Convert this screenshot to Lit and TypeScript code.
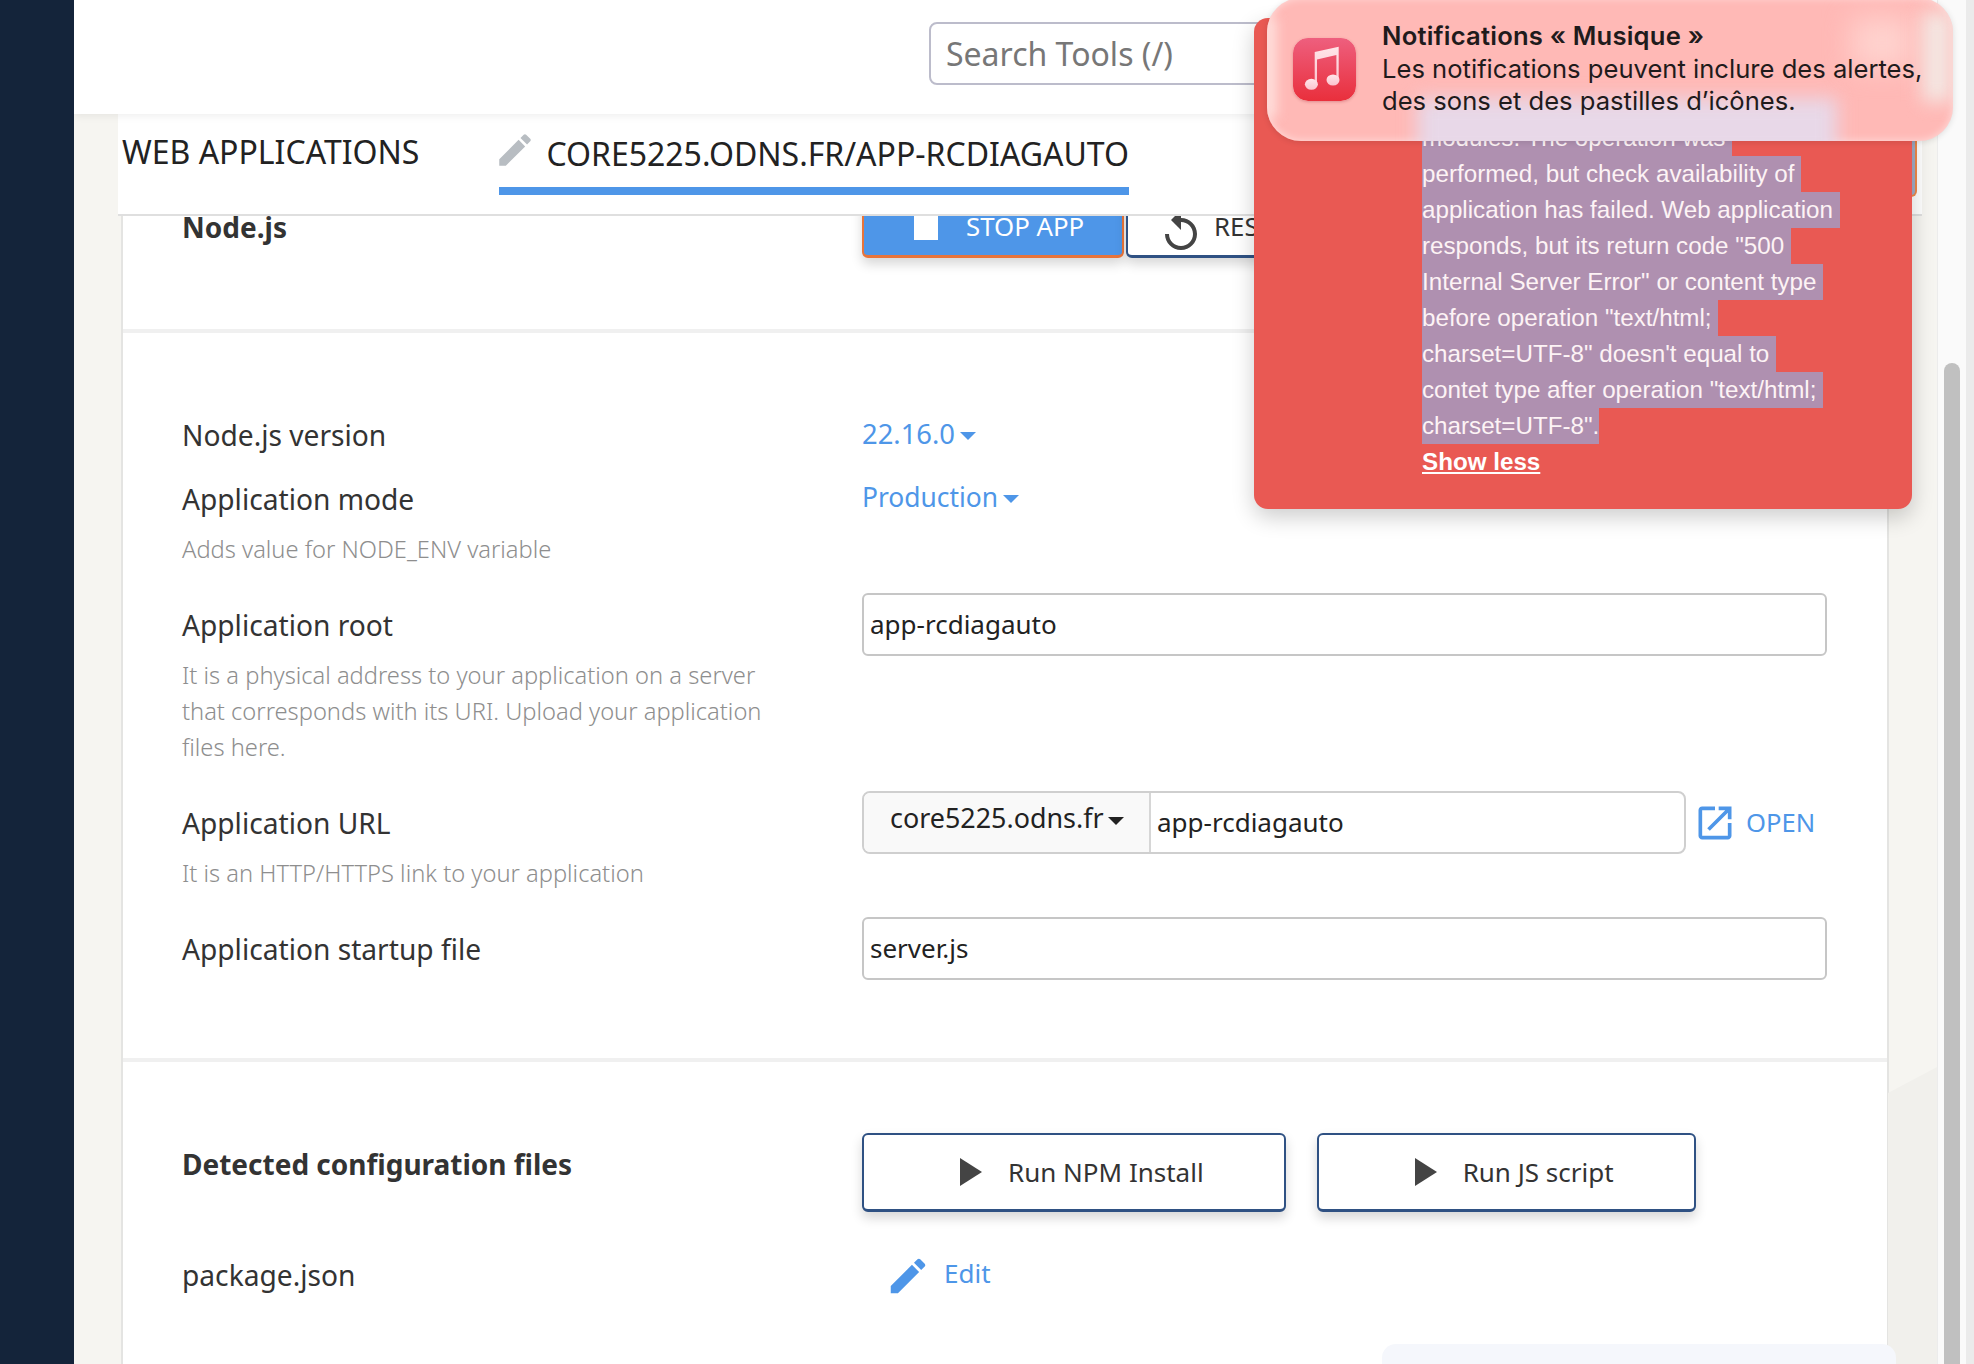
import { LitElement, html, css, svg } from "lit";
import { customElement } from "lit/decorators.js";

const icon = (d: string, size: number, cls = "") => html`<svg class="ic ${cls}" width=${size} height=${size} viewBox="0 0 24 24" fill="currentColor"><path d=${d}></path></svg>`;
const PENCIL = "M3 17.25V21h3.75L17.81 9.94l-3.75-3.75L3 17.25zM20.71 7.04c.39-.39.39-1.02 0-1.41l-2.34-2.34c-.39-.39-1.02-.39-1.41 0l-1.83 1.83 3.75 3.75 1.83-1.83z";
const REPLAY = "M12 5V1L7 6l5 5V7c3.31 0 6 2.69 6 6s-2.69 6-6 6-6-2.69-6-6H4c0 4.42 3.58 8 8 8s8-3.58 8-8-3.58-8-8-8z";
const STOP = "M6 6h12v12H6z";
const PLAY = "M8 5v14l11-7z";
const OPEN = "M19 19H5V5h7V3H5c-1.11 0-2 .9-2 2v14c0 1.1.89 2 2 2h14c1.1 0 2-.9 2-2v-7h-2v7zM14 3v2h3.59l-9.83 9.83 1.41 1.41L19 6.41V10h2V3h-7z";

const caret = (cls: string) => html`<svg class=${cls} width="16" height="8" viewBox="0 0 16 8" fill="currentColor"><path d="M0 0h16L8 8z"></path></svg>`;

const LINES = [
  "modules. The operation was ",
  "performed, but check availability of ",
  "application has failed. Web application ",
  'responds, but its return code "500 ',
  'Internal Server Error" or content type ',
  'before operation "text/html; ',
  'charset=UTF-8" doesn\'t equal to ',
  'contet type after operation "text/html; ',
  'charset=UTF-8".',
];

@customElement("app-root")
export class AppRoot extends LitElement {
  static styles = css`
    :host { display: block; width: 1974px; height: 1364px; position: relative; overflow: hidden; font-family: "Noto Sans", "Open Sans", sans-serif; color: #333; background: #f6f5f1; }
    * { box-sizing: border-box; }
    .ic { display: block; flex: none; }
    .shell { display: flex; height: 1364px; }
    .side { width: 74px; flex: none; background: #14243a; }
    .main { width: 1863px; flex: none; display: flex; flex-direction: column; height: 1364px; overflow: hidden; position: relative; background: #f6f5f1; }
    .rail { width: 37px; flex: none; display: flex; background: #fafafa; border-left: 1px solid #ececec; }
    .track { width: 28px; padding: 363px 0 0 6px; }
    .thumb { width: 16px; height: 1001px; background: #c0c0c0; border-radius: 8px 8px 0 0; }
    .rim { flex: 1; background: #ebebeb; }

    .top { height: 114px; flex: none; background: #fff; padding: 22px 0 0 855px; box-shadow: 0 2px 8px rgba(0,0,0,.07); position: relative; z-index: 2; }
    .search { width: 420px; height: 63px; border: 2px solid #bcbccb; border-radius: 8px; padding-left: 15px; font-size: 32px; line-height: 60px; color: #777; }

    .strip { height: 102px; flex: none; margin: 0 15px 0 44px; padding: 18px 5px 0 4px; background: #fff; border-bottom: 2px solid #dfdfdf; display: flex; gap: 80px; position: relative; z-index: 1; }
    .crumb { font-size: 32px; line-height: 40px; color: #222; white-space: nowrap; }
    .tab { display: flex; align-items: flex-start; gap: 10px; height: 62px; margin-top: 1px; border-bottom: 8px solid #4e96e8; font-size: 32px; line-height: 42px; color: #222; white-space: nowrap; }
    .tab .ic { color: #b8bdc2; margin: -4px 0 0 -5px; }
    .behind { margin-left: auto; width: 60px; height: 65px; background: #a3aec8; border-bottom: 2px solid #f08a4a; border-right: 2px solid #f08a4a; border-radius: 0 0 6px 0; }

    .card { width: 1768px; margin-left: 47px; flex: 1; background: #fff; border-left: 2px solid #e4e4e2; border-right: 2px solid #e4e4e2; min-height: 0; position: relative; z-index: 0; }
    .head { height: 113px; overflow: hidden; padding-left: 59px; display: grid; grid-template-columns: 680px 1fr; }
    .head .name { font-size: 28px; font-weight: 700; line-height: 40px; margin-top: -9px; }
    .head .acts { display: flex; gap: 2px; margin-top: -18px; height: 60px; }
    .sec { border-top: 4px solid #f0f0f0; padding: 83px 60px 0 59px; }
    .sec.form { height: 729px; }
    .row { display: grid; grid-template-columns: 680px 1fr; }
    .row + .row { margin-top: 39px; }
    .row.tight { margin-top: 24px; }
    .row.pkg { margin-top: 44px; }
    .lab { font-size: 28.16px; line-height: 38px; height: 40px; }
    .lab.b { font-size: 28px; font-weight: 700; line-height: 39px; }
    .hint { margin-top: 11px; font-size: 23.7px; line-height: 36px; font-weight: 300; color: #8e8e8e; width: 600px; }
    .val { display: flex; align-items: center; gap: 3px; color: #4e96e8; font-size: 26.4px; line-height: 36px; height: 36px; margin-top: -1px; }
    .val.ver { font-size: 27.4px; margin-top: 0; }
    .caret { margin-left: 2px; margin-top: 4px; }
    .field { height: 63px; margin-top: -13px; border: 2px solid #c6c6c6; border-radius: 6px; padding-left: 6px; font-size: 26px; line-height: 59px; color: #222; }
    .urlrow { display: flex; height: 63px; margin-top: -13px; align-items: center; }
    .group { width: 824px; height: 63px; display: flex; border: 2px solid #cfcfcf; border-radius: 8px; overflow: hidden; }
    .pick { width: 287px; flex: none; background: #f9f9f9; border-right: 2px solid #d6d6d6; padding: 0 0 10px 26px; display: flex; align-items: center; gap: 4px; font-size: 26.9px; color: #222; }
    .pick svg { margin-top: 6px; }
    .inner { padding-left: 6px; font-size: 26px; line-height: 59px; color: #222; }
    .open { display: flex; align-items: center; gap: 9px; margin-left: 7px; color: #4e96e8; font-size: 25.6px; }
    .btn { height: 79px; display: flex; align-items: center; justify-content: center; gap: 16px; padding: 0 80px; background: #fff; border: 2px solid #2f5183; border-bottom-width: 3px; border-radius: 6px; box-shadow: 0 6px 12px rgba(0,0,0,.16); font-size: 26px; color: #333; white-space: nowrap; }
    .btn .ic { color: #444; }
    .btns { display: flex; gap: 31px; margin-top: -12px; height: 79px; }
    .stop { width: 262px; height: 60px; justify-content: flex-start; padding: 0 0 0 38px; background: #4e96e8; border-color: #e8743a; color: #fff; font-size: 25.8px; }
    .stop .ic { color: #fff; }
    .stop span, .restart span { margin-top: -3px; }
    .restart { width: 300px; height: 60px; justify-content: flex-start; padding: 0 0 0 29px; gap: 9px; font-size: 25.8px; }
    .restart .ic { color: #444; margin-top: 8px; }
    .edit { display: flex; align-items: center; gap: 13px; margin-left: 23px; color: #4e96e8; font-size: 26px; height: 36px; }
    .edit .ic { margin-top: 3px; }
    .edit span { margin-top: -2px; }

    .deco { position: absolute; left: 1814px; top: 1067px; width: 49px; height: 297px; background: #f1f0ec; clip-path: polygon(0 26px, 49px 0, 49px 297px, 0 297px); }
    .pale { position: absolute; left: 1308px; top: 1344px; width: 514px; height: 40px; background: #f5f7fc; border-radius: 14px 14px 0 0; z-index: 1; }

    .red { position: absolute; z-index: 5; left: 1254px; top: 18px; width: 658px; height: 491px; background: #e95953; border-radius: 14px; padding: 102px 0 0 168px; box-shadow: 0 8px 22px rgba(0,0,0,.2); color: #fdf3f5; font-family: "Liberation Sans", Arial, sans-serif; font-size: 24.2px; line-height: 36px; }
    .red .ln { display: block; width: fit-content; height: 36px; background: #af90b0; white-space: pre; }
    .red .more { display: block; width: fit-content; color: #fff; font-weight: 700; text-decoration: underline; line-height: 35px; }

    .note { position: absolute; z-index: 6; left: 1267px; top: -2px; width: 686px; height: 143px; border-radius: 34px; background: #ffb9b6; overflow: hidden; box-shadow: 0 1px 6px rgba(0,0,0,.12), inset 0 0 8px rgba(255,255,255,.55); font-family: Inter, "Liberation Sans", sans-serif; color: #1f1b1c; }
    .blob { position: absolute; filter: blur(9px); }
    .blob.lav { left: 150px; top: 100px; width: 420px; height: 60px; background: #e8d8e8; }
    .blob.glow { left: 585px; top: 20px; width: 60px; height: 50px; background: #ffd2ce; filter: blur(14px); }
    .blob.edge { left: 655px; top: 14px; width: 30px; height: 90px; background: #f4e6e2; filter: blur(9px); }
    .blob.lft { left: -6px; top: 20px; width: 16px; height: 100px; background: #ffdcd9; filter: blur(6px); }
    .nbody { position: absolute; left: 26px; top: 22px; display: flex; align-items: flex-start; gap: 27px; }
    .app { margin-top: 18px; border-radius: 15px; box-shadow: 0 1px 3px rgba(150,30,50,.3); }
    .ntext { font-size: 25.6px; line-height: 32px; white-space: nowrap; margin-left: -1px; }
    .ntext b { font-weight: 600; display: block; height: 33px; letter-spacing: .2px; }
  `;

  render() {
    return html`
      <div class="shell">
        <div class="side"></div>
        <div class="main">
          <div class="top"><div class="search">Search Tools (/)</div></div>
          <div class="strip">
            <div class="crumb">WEB APPLICATIONS</div>
            <div class="tab">${icon(PENCIL, 42)}<span>CORE5225.ODNS.FR/APP-RCDIAGAUTO</span></div>
            <div class="behind"></div>
          </div>
          <div class="card">
            <div class="head">
              <div class="name">Node.js</div>
              <div class="acts">
                <div class="btn stop">${icon(STOP, 48)}<span>STOP APP</span></div>
                <div class="btn restart">${icon(REPLAY, 48)}<span>RESTART</span></div>
              </div>
            </div>
            <div class="sec form">
              <div class="row">
                <div class="lab">Node.js version</div>
                <div class="val ver">22.16.0${caret("caret")}</div>
              </div>
              <div class="row tight">
                <div><div class="lab">Application mode</div><div class="hint">Adds value for NODE_ENV variable</div></div>
                <div class="val">Production${caret("caret")}</div>
              </div>
              <div class="row">
                <div><div class="lab">Application root</div><div class="hint">It is a physical address to your application on a server that corresponds with its URI. Upload your application files here.</div></div>
                <div class="field">app-rcdiagauto</div>
              </div>
              <div class="row">
                <div><div class="lab">Application URL</div><div class="hint">It is an HTTP/HTTPS link to your application</div></div>
                <div class="urlrow">
                  <div class="group">
                    <div class="pick">core5225.odns.fr${caret("")}</div>
                    <div class="inner">app-rcdiagauto</div>
                  </div>
                  <div class="open">${icon(OPEN, 44)}<span>OPEN</span></div>
                </div>
              </div>
              <div class="row">
                <div class="lab">Application startup file</div>
                <div class="field">server.js</div>
              </div>
            </div>
            <div class="sec">
              <div class="row">
                <div class="lab b">Detected configuration files</div>
                <div class="btns">
                  <div class="btn">${icon(PLAY, 48)}<span>Run NPM Install</span></div>
                  <div class="btn">${icon(PLAY, 48)}<span>Run JS script</span></div>
                </div>
              </div>
              <div class="row pkg">
                <div class="lab">package.json</div>
                <div class="edit">${icon(PENCIL, 46)}<span>Edit</span></div>
              </div>
            </div>
          </div>
          <div class="deco"></div>
          <div class="pale"></div>
        </div>
        <div class="rail"><div class="track"><div class="thumb"></div></div><div class="rim"></div></div>
      </div>

      <div class="red">
        ${LINES.map((l) => html`<span class="ln">${l}</span>`)}
        <span class="more">Show less</span>
      </div>

      <div class="note">
        <div class="blob lav"></div>
        <div class="blob glow"></div>
        <div class="blob edge"></div>
        <div class="blob lft"></div>
        <div class="nbody">
          <svg class="app" width="63" height="63" viewBox="0 0 63 63">
            <defs>
              <linearGradient id="ag" x1="0" y1="0" x2="0" y2="1"><stop offset="0" stop-color="#ee5f7e"></stop><stop offset="1" stop-color="#e92f3c"></stop></linearGradient>
              <linearGradient id="ng" x1="0" y1="0" x2="0" y2="1"><stop offset="0" stop-color="#ffe6ea"></stop><stop offset="1" stop-color="#fbc3cd"></stop></linearGradient>
            </defs>
            <rect width="63" height="63" rx="15" fill="url(#ag)"></rect>
            ${svg`<path fill="url(#ng)" d="M21.7 14 45.7 8.7V42h-2.3V17L24 21.5V46.3h-2.3Z"></path>
            <ellipse cx="18.4" cy="46.3" rx="6.5" ry="5.5" fill="url(#ng)"></ellipse>
            <ellipse cx="40" cy="42" rx="6.5" ry="5.5" fill="url(#ng)"></ellipse>`}
          </svg>
          <div class="ntext"><b>Notifications « Musique »</b>Les notifications peuvent inclure des alertes,<br />des sons et des pastilles d’icônes.</div>
        </div>
      </div>
    `;
  }
}
